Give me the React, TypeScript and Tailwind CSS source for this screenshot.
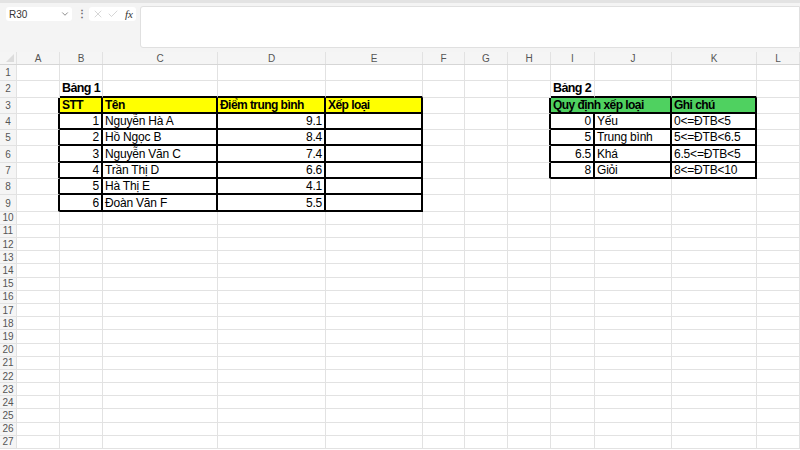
import { ChevronDown, X, Check } from 'lucide-react'

const cols = [
  { name: 'A', w: 43 },
  { name: 'B', w: 43 },
  { name: 'C', w: 115 },
  { name: 'D', w: 108 },
  { name: 'E', w: 97 },
  { name: 'F', w: 42 },
  { name: 'G', w: 43 },
  { name: 'H', w: 43 },
  { name: 'I', w: 44 },
  { name: 'J', w: 77 },
  { name: 'K', w: 85 },
  { name: 'L', w: 43 },
]

const rowCount = 27
const rowHeight = (r: number) => (r <= 9 ? 16.3 : 13.2)

// bảng nằm trên lưới: hàng 1-based, cột 0-based (A = 0)
const tables = [
  { r0: 3, r1: 9, c0: 1, c1: 4 },
  { r0: 3, r1: 7, c0: 8, c1: 10 },
]

const inTable = (r: number, c: number) =>
  tables.some((t) => r >= t.r0 && r <= t.r1 && c >= t.c0 && c <= t.c1)

type Cell = { v: string; align?: 'left' | 'right'; bold?: boolean; bg?: string; span?: number; big?: boolean }

const data: Record<string, Cell> = {
  '2-1': { v: 'Bảng 1', bold: true, big: true },
  '3-1': { v: 'STT', bold: true, bg: 'yellow' },
  '3-2': { v: 'Tên', bold: true, bg: 'yellow' },
  '3-3': { v: 'Điểm trung bình', bold: true, bg: 'yellow' },
  '3-4': { v: 'Xếp loại', bold: true, bg: 'yellow' },
  '2-8': { v: 'Bảng 2', bold: true, big: true },
  '3-8': { v: 'Quy định xếp loại', bold: true, bg: 'green', span: 2 },
  '3-10': { v: 'Ghi chú', bold: true, bg: 'green' },
}

const names = ['Nguyễn Hà A', 'Hồ Ngọc B', 'Nguyễn Văn C', 'Trần Thị D', 'Hà Thị E', 'Đoàn Văn F']
const scores = ['9.1', '8.4', '7.4', '6.6', '4.1', '5.5']
names.forEach((n, i) => {
  data[`${i + 4}-1`] = { v: String(i + 1), align: 'right' }
  data[`${i + 4}-2`] = { v: n }
  data[`${i + 4}-3`] = { v: scores[i], align: 'right' }
  data[`${i + 4}-4`] = { v: '' }
})

const rules = [
  ['0', 'Yếu', '0<=ĐTB<5'],
  ['5', 'Trung bình', '5<=ĐTB<6.5'],
  ['6.5', 'Khá', '6.5<=ĐTB<5'],
  ['8', 'Giỏi', '8<=ĐTB<10'],
]
rules.forEach((row, i) => {
  data[`${i + 4}-8`] = { v: row[0], align: 'right' }
  data[`${i + 4}-9`] = { v: row[1] }
  data[`${i + 4}-10`] = { v: row[2] }
})

function SheetCell({ r, c }: { r: number; c: number }) {
  const cell = data[`${r}-${c}`]
  const span = cell?.span ?? 1
  const lastC = c + span - 1
  let w = 0
  for (let i = c; i <= lastC; i++) w += cols[i].w
  const right = inTable(r, lastC) || inTable(r, lastC + 1)
  const bottom = inTable(r, c) || inTable(r + 1, c)
  const bg = cell?.bg === 'yellow' ? 'bg-[#ffff00]' : cell?.bg === 'green' ? 'bg-[#4fd160]' : 'bg-white'

  return (
    <div
      style={{ width: w }}
      className={`flex h-full shrink-0 items-end overflow-visible whitespace-nowrap px-[2px] pb-[1px] ${bg} ${
        right ? 'border-r-2 border-r-black' : 'border-r border-r-[#e2e2e2]'
      } ${bottom ? 'border-b-2 border-b-black' : 'border-b border-b-[#e2e2e2]'} ${
        cell?.align === 'right' ? 'justify-end' : 'justify-start'
      }`}
    >
      {cell && (
        <span
          className={`leading-none text-black ${
            cell.big
              ? 'text-[12.5px] font-bold tracking-[-0.6px]'
              : cell.bold
              ? 'text-[12px] font-bold tracking-[-0.55px]'
              : 'text-[12px] tracking-[-0.2px]'
          }`}
        >
          {cell.v}
        </span>
      )}
    </div>
  )
}

function SheetRow({ r }: { r: number }) {
  const cells: JSX.Element[] = []
  let c = 0
  while (c < cols.length) {
    cells.push(<SheetCell key={c} r={r} c={c} />)
    c += data[`${r}-${c}`]?.span ?? 1
  }
  return (
    <div className="flex" style={{ height: rowHeight(r) }}>
      <div className="flex w-[17px] shrink-0 items-center justify-center border-r border-b border-[#e2e2e2] bg-[#f5f5f5] text-[10px] text-[#555]">
        {r}
      </div>
      {cells}
    </div>
  )
}

export default function App() {
  const rows = Array.from({ length: rowCount }, (_, i) => i + 1)

  return (
    <div className="h-[450px] w-[800px] overflow-hidden bg-white" style={{ fontFamily: '"Liberation Sans", Arial, sans-serif' }}>
      {/* thanh công thức */}
      <div className="h-[52px] border-t-[3px] border-[#e3e3e3] bg-[#f4f4f4]">
        <div className="flex items-start pt-[3px]">
          <div className="ml-[6px] mt-[1px] flex h-[14px] w-[66px] items-center justify-between rounded-[3px] bg-white pl-[3px] pr-[2px]">
            <span className="text-[10px] text-[#333]">R30</span>
            <ChevronDown size={10} strokeWidth={1.6} className="text-[#555]" />
          </div>
          <div className="ml-[5px] mt-[1px] flex h-[14px] w-[10px] items-center justify-center text-[10px] font-bold leading-none text-[#666]">
            ⋮
          </div>
          <div className="ml-[2px] mt-[1px] flex h-[14px] w-[47px] items-center gap-[3px] rounded-[3px] bg-white pl-[3px]">
            <X size={12} strokeWidth={1.2} className="text-[#bbb]" />
            <Check size={12} strokeWidth={1.2} className="text-[#bbb]" />
            <span
              className="ml-[3px] text-[11px] italic text-[#333]"
              style={{ fontFamily: '"Liberation Serif", serif' }}
            >
              fx
            </span>
          </div>
          <div className="ml-[4px] h-[42px] flex-1 rounded-l-[3px] border border-[#e0e0e0] bg-white" />
        </div>
      </div>

      {/* tiêu đề cột */}
      <div className="flex h-[13px] border-b border-[#d6d6d6] bg-[#f5f5f5]">
        <div className="relative w-[17px] shrink-0 border-r border-[#e2e2e2]">
          <div className="absolute right-[2px] bottom-[2px] h-0 w-0 border-b-[8px] border-l-[8px] border-b-[#dcdcdc] border-l-transparent" />
        </div>
        {cols.map((col) => (
          <div
            key={col.name}
            style={{ width: col.w }}
            className="flex shrink-0 items-center justify-center border-r border-[#e2e2e2] text-[10px] text-[#555]"
          >
            {col.name}
          </div>
        ))}
      </div>

      {rows.map((r) => (
        <SheetRow key={r} r={r} />
      ))}
    </div>
  )
}
